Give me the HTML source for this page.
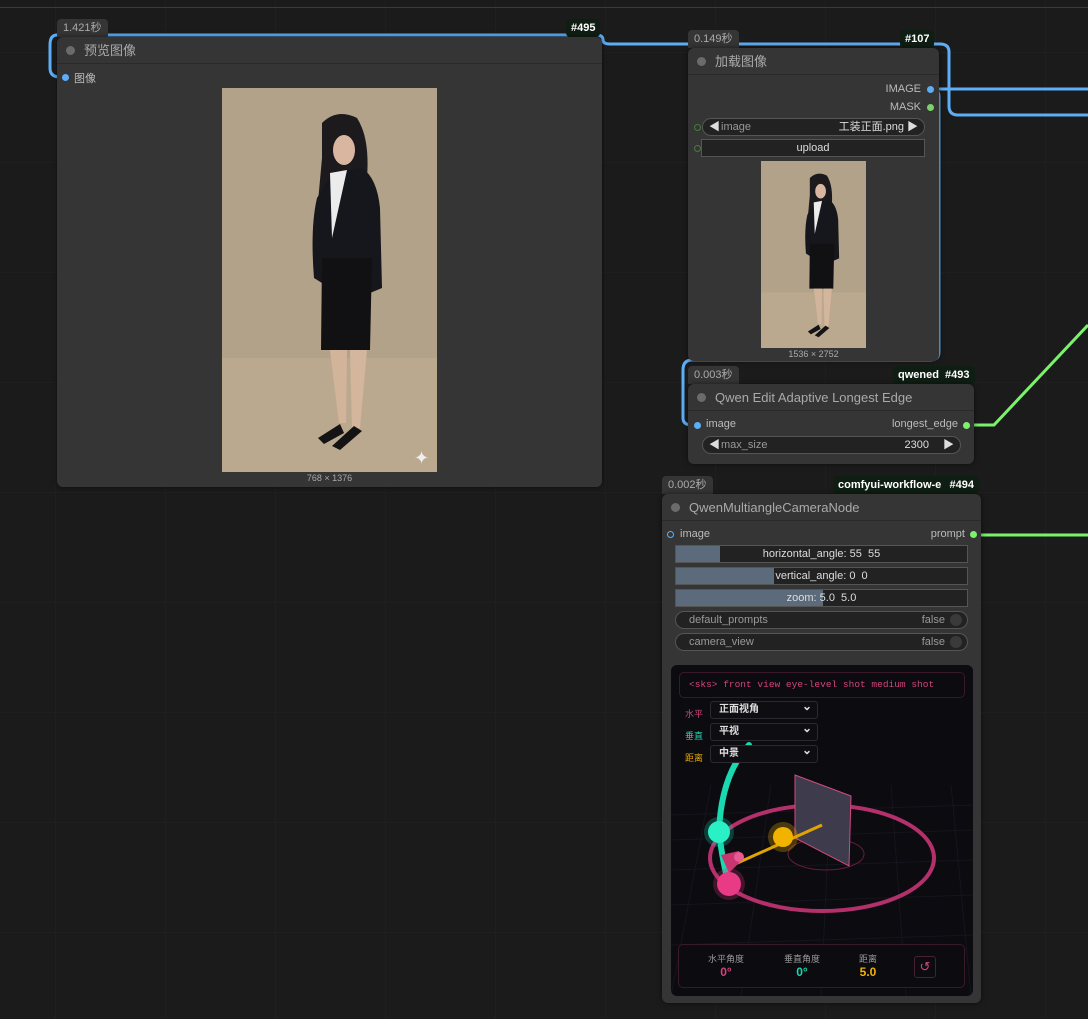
<!DOCTYPE html>
<html><head><meta charset="utf-8">
<style>
*{box-sizing:border-box;margin:0;padding:0}
body{width:1088px;height:1019px;overflow:hidden;background:#1b1b1b;font-family:"Liberation Sans","Noto Sans CJK SC",sans-serif;position:relative;color:#ccc}
.grid{position:absolute;inset:0;background-image:linear-gradient(#1f1f1f 1px,transparent 1px),linear-gradient(90deg,#1f1f1f 1px,transparent 1px);background-size:110px 110px;background-position:55px 52px}
.abs{position:absolute}
.node{position:absolute;background:#353535;border-radius:6px;box-shadow:0 0 6px rgba(0,0,0,.5)}
.hdr{height:27px;border-bottom:1px solid #2a2a2a;color:#aaa;font-size:13px;line-height:27px;padding-left:27px;position:relative}
.hdr:before{content:"";position:absolute;left:9px;top:9px;width:9px;height:9px;border-radius:50%;background:#6b6b6b}
.badge{position:absolute;height:18px;background:#353535;color:#aaa;font-size:11px;line-height:18px;padding:0 6px;border-radius:4px 4px 0 0}
.gbadge{position:absolute;height:18px;background:#0f1e13;color:#fff;font-size:11px;font-weight:bold;line-height:18px;padding:0 5px;border-radius:4px}
.lbl{position:absolute;font-size:11px;color:#bbb}
.dot{position:absolute;width:7px;height:7px;border-radius:50%}
.combo{position:absolute;height:18px;border:1px solid #555;border-radius:9px;background:#222;font-size:11px;line-height:16px;color:#999}
.sl{position:absolute;height:18px;border:1px solid #555;background:#222;font-size:11px;line-height:16px;color:#ddd;text-align:center}
.sl i{position:absolute;left:0;top:0;bottom:0;background:#5b6b7b}
.sl span{position:relative}
.tg{position:absolute;height:18px;border:1px solid #555;border-radius:9px;background:#222;font-size:11px;line-height:16px;color:#999;padding-left:13px}
.tg b{position:absolute;right:5px;top:2px;width:12px;height:12px;border-radius:50%;background:#3a3a3a}
.tg em{position:absolute;right:22px;font-style:normal}
.dd{position:absolute;left:710px;width:108px;height:18px;border:1px solid #2a2a30;border-radius:3px;background:#0e0d12;color:#ddd;font-size:10px;font-weight:bold;line-height:16px;padding-left:8px}
.dd:after{content:"⌄";position:absolute;right:5px;top:-4px;font-size:12px;color:#ddd}
</style></head><body>
<div class="grid"></div>
<div class="abs" style="left:0;top:7px;width:1088px;height:1px;background:#3a3a3a"></div>

<svg class="abs" style="left:0;top:0" width="1088" height="1019">
<g fill="none" stroke="#5eaef5" stroke-width="3">
<path d="M57 35 H596 Q603 35 603 40 Q603 44 610 44 H940 Q949 44 949 52 V106 Q949 115 958 115 H1088"/>
<path d="M57 35 Q50 35 50 45 V68 Q50 77 60 77"/>
<path d="M932 89 H1088"/>
<path d="M932 89 Q939 89 939 97 V352 Q939 360 930 360 H692 Q683 360 683 370 V418 Q683 425 692 425"/>
</g>
<g fill="none" stroke="#7af36b" stroke-width="3">
<path d="M968 425 H994 L1088 325"/>
<path d="M975 535 H1088"/>
</g>
</svg>

<!-- Node 495 -->
<div class="badge" style="left:57px;top:19px">1.421秒</div>
<div class="gbadge" style="left:566px;top:19px">#495</div>
<div class="node" style="left:57px;top:37px;width:545px;height:450px">
<div class="hdr">预览图像</div>
</div>
<div class="dot" style="left:62px;top:74px;background:#5eaef5"></div>
<div class="lbl" style="left:74px;top:70px">图像</div>

<svg width="0" height="0" style="position:absolute">
<defs>
<g id="fig">
<rect width="215" height="384" fill="#b3a28a"/>
<rect y="270" width="215" height="114" fill="#bba98f"/>
<path d="M100 35 Q115 20 135 30 Q148 50 145 90 L150 120 L95 125 L100 70 Z" fill="#1c1a1c"/>
<ellipse cx="122" cy="62" rx="11" ry="15" fill="#d8b6a0"/>
<path d="M110 85 L140 80 Q155 90 158 120 L160 200 L148 205 L140 175 L100 195 L92 190 Q88 140 95 110 Z" fill="#16171c"/>
<path d="M108 85 L125 82 L110 150 Z" fill="#ececec"/>
<path d="M100 170 L150 170 L148 262 L99 262 Z" fill="#111114"/>
<path d="M108 262 L125 262 L124 335 L117 335 Z" fill="#d2b49a"/>
<path d="M128 262 L145 262 L138 340 L130 340 Z" fill="#d4b69c"/>
<path d="M96 350 L118 336 L122 345 L102 356 Z M110 358 L132 338 L140 343 L118 362 Z" fill="#141414"/>
</g>
</defs></svg>
<svg class="abs" style="left:222px;top:88px" width="215" height="384" viewBox="0 0 215 384"><use href="#fig"/><text x="192" y="376" fill="#eee" font-size="18" font-family="DejaVu Sans">✦</text></svg>
<div class="lbl" style="left:222px;top:473px;width:215px;text-align:center;font-size:9px;color:#aaa">768 × 1376</div>

<!-- Node 107 -->
<div class="badge" style="left:688px;top:30px">0.149秒</div>
<div class="gbadge" style="left:900px;top:30px">#107</div>
<div class="node" style="left:688px;top:48px;width:251px;height:313px">
<div class="hdr">加载图像</div>
</div>
<div class="lbl" style="left:820px;top:83px;width:101px;text-align:right">IMAGE</div>
<div class="dot" style="left:927px;top:86px;background:#5eaef5"></div>
<div class="lbl" style="left:820px;top:101px;width:101px;text-align:right">MASK</div>
<div class="dot" style="left:927px;top:104px;background:#7ad36b"></div>
<div class="dot" style="left:694px;top:124px;border:1px solid #4a7a40"></div>
<div class="dot" style="left:694px;top:145px;border:1px solid #4a7a40"></div>
<div class="combo" style="left:702px;top:118px;width:223px"><span style="position:absolute;left:6px;color:#ddd">◀</span><span style="position:absolute;left:18px">image</span><span style="position:absolute;right:20px;color:#ddd">工装正面.png</span><span style="position:absolute;right:6px;color:#ddd">▶</span></div>
<div class="sl" style="left:701px;top:139px;width:224px">upload</div>
<svg class="abs" style="left:761px;top:161px" width="105" height="187" viewBox="0 0 215 384" preserveAspectRatio="none"><use href="#fig"/></svg>
<div class="lbl" style="left:761px;top:349px;width:105px;text-align:center;font-size:9px;color:#aaa">1536 × 2752</div>

<!-- Node 493 -->
<div class="badge" style="left:688px;top:366px">0.003秒</div>
<div class="gbadge" style="left:893px;top:366px">qwened&nbsp; #493</div>
<div class="node" style="left:688px;top:384px;width:286px;height:80px">
<div class="hdr">Qwen Edit Adaptive Longest Edge</div>
</div>
<div class="dot" style="left:694px;top:422px;background:#5eaef5"></div>
<div class="lbl" style="left:706px;top:418px">image</div>
<div class="lbl" style="left:840px;top:418px;width:118px;text-align:right">longest_edge</div>
<div class="dot" style="left:963px;top:422px;background:#7af36b"></div>
<div class="combo" style="left:702px;top:436px;width:259px"><span style="position:absolute;left:6px;color:#ddd">◀</span><span style="position:absolute;left:18px">max_size</span><span style="position:absolute;right:31px;color:#ddd">2300</span><span style="position:absolute;right:6px;color:#ddd">▶</span></div>

<!-- Node 494 -->
<div class="badge" style="left:662px;top:476px">0.002秒</div>
<div class="gbadge" style="left:833px;top:476px;width:146px;white-space:nowrap;overflow:hidden">comfyui-workflow-e<span style="position:absolute;right:0;top:0;padding:0 5px;background:#0f1e13">#494</span></div>
<div class="node" style="left:662px;top:494px;width:319px;height:509px">
<div class="hdr">QwenMultiangleCameraNode</div>
</div>
<div class="dot" style="left:667px;top:531px;border:1px solid #5eaef5"></div>
<div class="lbl" style="left:680px;top:528px">image</div>
<div class="lbl" style="left:880px;top:528px;width:85px;text-align:right">prompt</div>
<div class="dot" style="left:970px;top:531px;background:#7af36b"></div>
<div class="sl" style="left:675px;top:545px;width:293px"><i style="width:44px"></i><span>horizontal_angle: 55&nbsp; 55</span></div>
<div class="sl" style="left:675px;top:567px;width:293px"><i style="width:98px"></i><span>vertical_angle: 0&nbsp; 0</span></div>
<div class="sl" style="left:675px;top:589px;width:293px"><i style="width:147px"></i><span>zoom: 5.0&nbsp; 5.0</span></div>
<div class="tg" style="left:675px;top:611px;width:293px">default_prompts<em>false</em><b></b></div>
<div class="tg" style="left:675px;top:633px;width:293px">camera_view<em>false</em><b></b></div>

<div class="abs" style="left:671px;top:665px;width:302px;height:331px;background:#0c0b10;border-radius:6px;overflow:hidden">
<svg width="302" height="331" style="position:absolute;left:0;top:0">
<g stroke="#16141d" stroke-width="1">
<path d="M0 150 L302 140 M0 175 L302 165 M0 205 L302 195 M0 240 L302 230 M0 280 L302 270 M40 120 L0 331 M100 120 L70 331 M160 120 L150 331 M220 120 L235 331 M280 120 L300 331"/>
</g>
<ellipse cx="151" cy="193" rx="112" ry="53" fill="none" stroke="#b3306b" stroke-width="4"/>
<ellipse cx="155" cy="189" rx="38" ry="16" fill="none" stroke="#6a1d3c" stroke-width="1"/>
<path d="M124 110 L180 131 L178 201 L124 173 Z" fill="#3e3c4c" stroke="#d04a80" stroke-width="1"/>
<path d="M78 80 Q50 110 48 167 Q52 200 58 219" fill="none" stroke="#18d9b0" stroke-width="6" stroke-linecap="round"/>
<line x1="62" y1="200" x2="151" y2="160" stroke="#e0a400" stroke-width="3"/>
<circle cx="112" cy="172" r="15" fill="#e0a400" opacity=".3"/>
<circle cx="112" cy="172" r="10" fill="#f2b300"/>
<circle cx="48" cy="167" r="15" fill="#18d9b0" opacity=".25"/>
<circle cx="48" cy="167" r="11" fill="#2af0c6"/>
<path d="M50 190 L68 186 L70 196 L58 208 Z" fill="#c8356f"/>
<circle cx="68" cy="192" r="5" fill="#e85a95"/>
<circle cx="58" cy="219" r="16" fill="#e03579" opacity=".25"/>
<circle cx="58" cy="219" r="12" fill="#e83a85"/>
</svg>
<div class="abs" style="left:8px;top:7px;width:286px;height:26px;border:1px solid #3a1a28;border-radius:5px;font-family:'Liberation Mono',monospace;font-size:9.5px;color:#d0457c;line-height:24px;padding-left:9px;background:#0c0b10">&lt;sks&gt; front view eye-level shot medium shot</div>
<div class="abs" style="left:14px;top:42px;font-size:9px;color:#d0457c">水平</div>
<div class="abs" style="left:14px;top:64px;font-size:9px;color:#18d9b0">垂直</div>
<div class="abs" style="left:14px;top:86px;font-size:9px;color:#e0a400">距离</div>
<div class="abs" style="left:7px;top:279px;width:287px;height:44px;border:1px solid #3a1a28;border-radius:5px;background:#0c0b10"></div>
<div class="abs" style="left:30px;top:287px;width:50px;text-align:center;font-size:9px;color:#999">水平角度</div>
<div class="abs" style="left:30px;top:300px;width:50px;text-align:center;font-size:12px;font-weight:bold;color:#d0457c">0°</div>
<div class="abs" style="left:106px;top:287px;width:50px;text-align:center;font-size:9px;color:#999">垂直角度</div>
<div class="abs" style="left:106px;top:300px;width:50px;text-align:center;font-size:12px;font-weight:bold;color:#18d9b0">0°</div>
<div class="abs" style="left:172px;top:287px;width:50px;text-align:center;font-size:9px;color:#999">距离</div>
<div class="abs" style="left:172px;top:300px;width:50px;text-align:center;font-size:12px;font-weight:bold;color:#f2b300">5.0</div>
<div class="abs" style="left:243px;top:291px;width:22px;height:22px;border:1px solid #4a1f30;border-radius:3px;color:#d0457c;font-size:13px;text-align:center;line-height:20px">↺</div>
</div>
<div class="dd" style="top:701px">正面视角</div>
<div class="dd" style="top:723px">平视</div>
<div class="dd" style="top:745px">中景</div>
</body></html>
